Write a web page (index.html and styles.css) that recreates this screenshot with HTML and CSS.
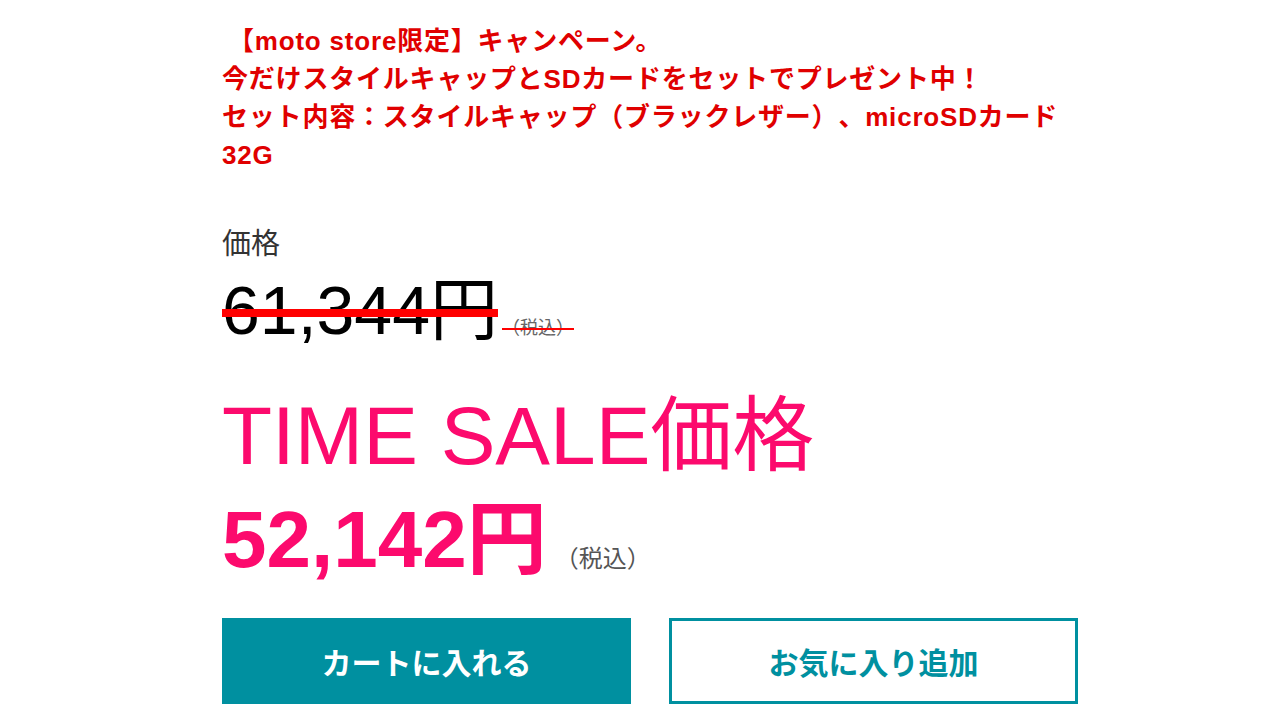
FILE: index.html
```html
<!DOCTYPE html>
<html lang="ja">
<head>
<meta charset="utf-8">
<link rel="stylesheet" href="styles.css">
</head>
<body>
<div class="wrap">
  <p class="campaign"><span class="indent">【moto store限定】キャンペーン。</span><br>今だけスタイルキャップとSDカードをセットでプレゼント中！<br>セット内容：スタイルキャップ（ブラックレザー）、microSDカード<br>32G</p>
  <div class="label">価格</div>
  <div class="old"><span class="old-num">61,344円</span><span class="old-tax">（税込）</span></div>
  <div class="sale-title">TIME SALE価格</div>
  <div class="sale"><span class="sale-num">52,142円</span><span class="sale-tax">（税込）</span></div>
  <div class="buttons">
    <div class="btn btn-cart">カートに入れる</div>
    <div class="btn btn-fav">お気に入り追加</div>
  </div>
</div>
</body>
</html>
```
FILE: styles.css
```css
html, body { margin: 0; padding: 0; background: #fff; }
body { font-family: "Liberation Sans", Arial, "Noto Sans CJK JP", sans-serif; width: 1280px; height: 720px; overflow: hidden; text-spacing-trim: space-all; }
.wrap { margin-left: 222px; width: 856px; padding-top: 22px; }
.campaign { margin: 0; color: #e00000; font-weight: bold; font-size: 26px; line-height: 38px; letter-spacing: 0.8px; }
.indent { margin-left: 6px; }
.label { margin-top: 52px; font-size: 29px; color: #333; line-height: 36px; }
.old { margin-top: 12px; display: flex; align-items: baseline; height: 72px; }
.old-num { font-size: 68px; color: #000; line-height: 72px; text-decoration: line-through; text-decoration-color: #ff0000; text-decoration-thickness: 8px; }
.old-tax { font-size: 18px; color: #666; line-height: 20px; margin-left: 4px; text-decoration: line-through; text-decoration-color: #ff0000; text-decoration-thickness: 2px; }
.sale-title { margin-top: 40px; font-size: 82px; color: #fc0a6d; line-height: 100px; }
.sale { display: flex; align-items: baseline; height: 84px; margin-top: 12px; }
.sale-num { font-size: 80px; font-weight: bold; color: #fc0a6d; line-height: 84px; }
.sale-tax { font-size: 24px; color: #555; line-height: 28px; margin-left: 8px; }
.buttons { display: flex; gap: 38px; margin-top: 36px; }
.btn { width: 409px; height: 86px; box-sizing: border-box; display: flex; align-items: center; justify-content: center; font-size: 30px; font-weight: bold; }
.btn-cart { background: #0090a0; color: #fff; }
.btn-fav { border: 3px solid #0090a0; color: #0090a0; background: #fff; }
```
